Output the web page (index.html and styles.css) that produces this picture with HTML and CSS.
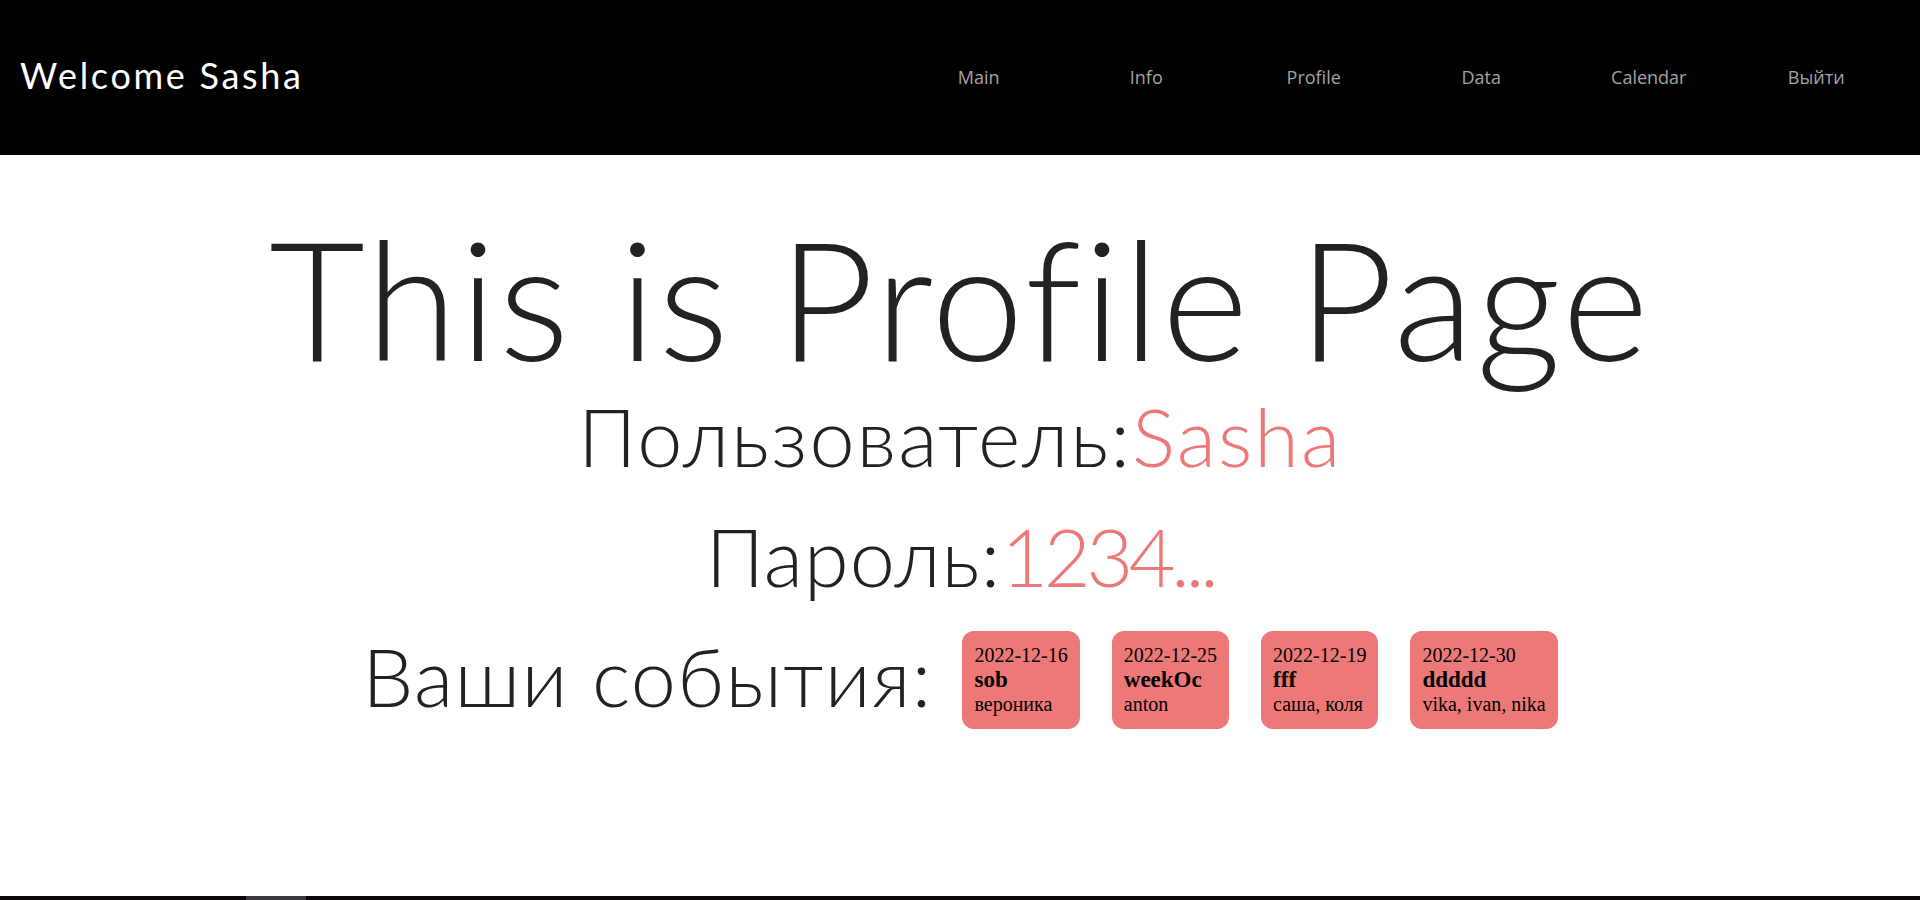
FILE: index.html
```html
<!DOCTYPE html>
<html lang="ru">
<head>
<meta charset="utf-8">
<title>Profile</title>
<link rel="stylesheet" href="styles.css">
</head>
<body>
<header class="topbar">
  <div class="brand">Welcome Sasha</div>
  <nav class="nav">
    <a class="nav-item" href="#">Main</a>
    <a class="nav-item" href="#">Info</a>
    <a class="nav-item" href="#">Profile</a>
    <a class="nav-item" href="#">Data</a>
    <a class="nav-item" href="#">Calendar</a>
    <a class="nav-item" href="#">Выйти</a>
  </nav>
</header>
<main class="content">
  <h1 class="title">This is Profile Page</h1>
  <div class="info-line info-first">Пользователь:<span class="accent">Sasha</span></div>
  <div class="info-line info-pass">Пароль:<span class="accent digits">1234...</span></div>
  <div class="events-row">
    <div class="info-line events-label">Ваши события:</div>
    <div class="cards">
      <div class="card">
        <div>2022-12-16</div>
        <div class="card-name">sob</div>
        <div>вероника</div>
      </div>
      <div class="card">
        <div>2022-12-25</div>
        <div class="card-name">weekOc</div>
        <div>anton</div>
      </div>
      <div class="card">
        <div>2022-12-19</div>
        <div class="card-name">fff</div>
        <div>саша, коля</div>
      </div>
      <div class="card">
        <div>2022-12-30</div>
        <div class="card-name">ddddd</div>
        <div>vika, ivan, nika</div>
      </div>
    </div>
  </div>
</main>
<footer class="footer"><span class="footer-thumb"></span></footer>
</body>
</html>
```
FILE: styles.css
```css
html, body {
  margin: 0;
  padding: 0;
}
body {
  height: 100vh;
  display: flex;
  flex-direction: column;
  background: #fff;
  font-family: "Lato", "Open Sans", sans-serif;
  overflow: hidden;
}
.topbar {
  height: 155px;
  flex: none;
  background: #000;
  display: flex;
  align-items: center;
  justify-content: space-between;
  padding: 0 20px;
}
.brand {
  color: #fff;
  font-family: "Lato", sans-serif;
  font-weight: 400;
  font-size: 36px;
  letter-spacing: 2.7px;
  margin-top: -6px;
}
.nav {
  display: flex;
}
.nav-item {
  width: 167.5px;
  text-align: center;
  color: #a3a3a3;
  text-decoration: none;
  font-family: "Open Sans", sans-serif;
  font-size: 18px;
  margin-top: -2px;
}
.content {
  flex: 1;
  display: flex;
  flex-direction: column;
  align-items: center;
  color: #222;
}
.title {
  margin: 59px 0 0;
  font-weight: 300;
  font-size: 166px;
  line-height: 166px;
  letter-spacing: 2.3px;
}
.info-line {
  font-weight: 300;
  font-size: 81px;
  line-height: 120px;
  letter-spacing: 2px;
}
.info-first {
  margin-top: -4px;
}
.info-pass {
  letter-spacing: 1px;
}
.digits {
  letter-spacing: -4.5px;
}
.events-label {
  letter-spacing: 1.3px;
}
.accent {
  color: #ec7878;
}
.events-row {
  display: flex;
  align-items: center;
  gap: 30px;
}
.cards {
  display: flex;
  gap: 32px;
  margin-top: 8px;
}
.card {
  background: #ec7878;
  border-radius: 12px;
  padding: 12px 12px 12px;
  font-family: "Liberation Serif", serif;
  font-size: 20px;
  line-height: 24.5px;
  color: #000;
}
.card-name {
  font-weight: bold;
  font-size: 23px;
}
.footer {
  height: 4px;
  flex: none;
  background: #0a060a;
  display: flex;
}
.footer-thumb {
  margin-left: 246px;
  width: 60px;
  background: #3b383d;
}
```
